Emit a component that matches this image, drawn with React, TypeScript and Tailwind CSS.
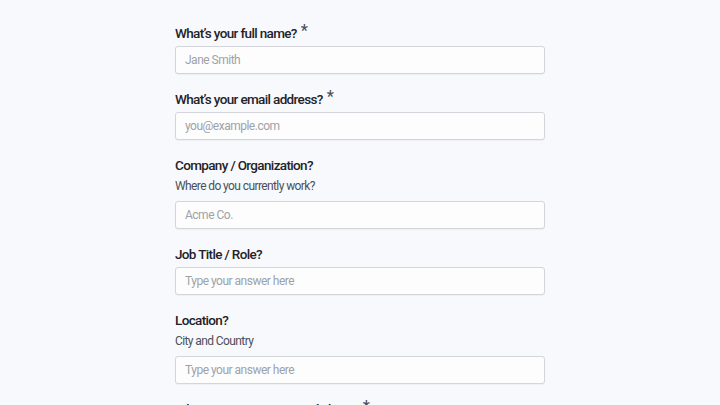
import React from 'react'

type Field = {
  label: string
  required?: boolean
  hint?: string
  placeholder: string
}

const fields: Field[] = [
  { label: 'What’s your full name?', required: true, placeholder: 'Jane Smith' },
  { label: 'What’s your email address?', required: true, placeholder: 'you@example.com' },
  { label: 'Company / Organization?', hint: 'Where do you currently work?', placeholder: 'Acme Co.' },
  { label: 'Job Title / Role?', placeholder: 'Type your answer here' },
  { label: 'Location?', hint: 'City and Country', placeholder: 'Type your answer here' },
  { label: 'What are you most excited about?', required: true, placeholder: 'Type your answer here' },
]

export default function App() {
  return (
    <div
      className="min-h-screen h-[405px] overflow-hidden bg-[#f8f9fc]"
      style={{ fontFamily: 'Roboto, "Noto Sans", sans-serif' }}
    >
      <form className="w-[370px] ml-[175px] pt-[23px] flex flex-col gap-[15px]">
        {fields.map((f) => (
          <div key={f.label} className="flex flex-col">
            <label className="text-[13.5px] leading-5 font-medium tracking-[-0.65px] text-[#1f2328] flex items-start">
              {f.label}
              {f.required && (
                <span className="ml-[4px] text-[16px] leading-4 text-[#4b5057] mt-0">*</span>
              )}
            </label>
            {f.hint && (
              <p className="mt-px text-[12px] leading-5 tracking-[-0.6px] text-[#4b5057]">{f.hint}</p>
            )}
            <input
              type="text"
              placeholder={f.placeholder}
              className={`${f.hint ? 'mt-[5px]' : 'mt-[3px]'} h-[28px] w-full rounded-[3px] border border-[#d3d5da] bg-[#fdfdfe] px-[9px] text-[12px] tracking-[-0.5px] text-[#1f2328] placeholder:text-[#9ea2a8] shadow-[0_1px_1px_rgba(0,0,0,0.04)] focus:outline-none`}
            />
          </div>
        ))}
      </form>
    </div>
  )
}
